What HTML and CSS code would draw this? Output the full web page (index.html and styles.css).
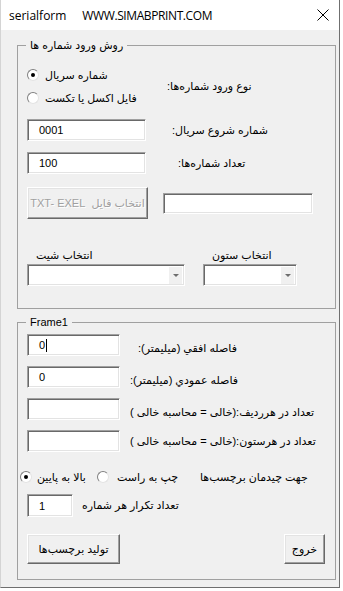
FILE: index.html
```html
<!DOCTYPE html>
<html lang="fa">
<head>
    <meta charset="UTF-8">
    <meta name="viewport" content="width=device-width, initial-scale=1.0">
    <title>serialform</title>
    <link rel="stylesheet" href="styles.css">
</head>
<body>

    <div class="window">
        <!-- Barra de título -->
        <div class="titlebar">
            <span class="title-name">serialform</span>
            <span class="title-site">WWW.SIMABPRINT.COM</span>
            <svg class="close" width="12" height="12" viewBox="0 0 12 12">
                <path d="M0.5 0.5 L11.5 11.5 M11.5 0.5 L0.5 11.5" stroke="#000" stroke-width="1" fill="none"/>
            </svg>
        </div>

        <div class="client">
            <!-- Marco 1: método de entrada -->
            <fieldset class="frame frame-input">
                <legend><span dir="rtl">روش ورود شماره ها</span></legend>
                <div class="frame-body">
                    <div class="row row-type">
                        <div class="radio-group">
                            <div class="radio-line">
                                <span class="radio checked"></span>
                                <span dir="rtl">شماره سریال</span>
                            </div>
                            <div class="radio-line">
                                <span class="radio"></span>
                                <span dir="rtl">فایل اکسل یا تکست</span>
                            </div>
                        </div>
                        <span class="lbl" dir="rtl">نوع ورود شماره‌ها:</span>
                    </div>

                    <div class="row row-start">
                        <div class="textbox wide">0001</div>
                        <span class="lbl" dir="rtl">شماره شروع سریال:</span>
                    </div>

                    <div class="row row-count">
                        <div class="textbox wide">100</div>
                        <span class="lbl" dir="rtl">تعداد شماره‌ها:</span>
                    </div>

                    <div class="row row-file">
                        <button class="button file-btn" disabled><span dir="rtl">انتخاب فایل&nbsp; TXT- EXEL</span></button>
                        <div class="textbox path"></div>
                    </div>

                    <div class="row row-pick">
                        <div class="pick pick-sheet">
                            <span class="pick-caption" dir="rtl">انتخاب شیت</span>
                            <div class="combo"><span class="drop"></span></div>
                        </div>
                        <div class="pick pick-column">
                            <span class="pick-caption" dir="rtl">انتخاب ستون</span>
                            <div class="combo"><span class="drop"></span></div>
                        </div>
                    </div>
                </div>
            </fieldset>

            <!-- Marco 2: Frame1 -->
            <fieldset class="frame frame-layout">
                <legend>Frame1</legend>
                <div class="frame-body">
                    <div class="row row-h">
                        <div class="textbox mid">0<span class="caret"></span></div>
                        <span class="lbl" dir="rtl">فاصله افقي (ميليمتر):</span>
                    </div>

                    <div class="row row-v">
                        <div class="textbox mid">0</div>
                        <span class="lbl" dir="rtl">فاصله عمودي (ميليمتر):</span>
                    </div>

                    <div class="row row-per-row">
                        <div class="textbox mid"></div>
                        <span class="lbl" dir="rtl">تعداد در هرردیف:(خالی = محاسبه خالی )</span>
                    </div>

                    <div class="row row-per-col">
                        <div class="textbox mid"></div>
                        <span class="lbl" dir="rtl">تعداد در هرستون:(خالی = محاسبه خالی )</span>
                    </div>

                    <div class="row row-dir">
                        <span class="radio checked"></span>
                        <span class="dir-a" dir="rtl">بالا به پایین</span>
                        <span class="radio dir-radio2"></span>
                        <span class="dir-b" dir="rtl">چپ به راست</span>
                        <span class="dir-c" dir="rtl">جهت چیدمان برچسب‌ها</span>
                    </div>

                    <div class="row row-repeat">
                        <div class="textbox small">1</div>
                        <span class="lbl" dir="rtl">تعداد تکرار هر شماره</span>
                    </div>

                    <div class="row row-actions">
                        <button class="button make-btn"><span dir="rtl">تولید برچسب‌ها</span></button>
                        <button class="button exit-btn"><span dir="rtl">خروج</span></button>
                    </div>
                </div>
            </fieldset>
        </div>
    </div>

</body>
</html>
```

FILE: styles.css
```css
body {
    margin: 0;
    background-color: #fff;
    font-family: "Liberation Sans", "DejaVu Sans", sans-serif;
    font-size: 11px;
    color: #000;
}

/* Ventana */
.window {
    width: 340px;
    height: 588px;
    box-sizing: border-box;
    background-color: #f0f0f0;
    border-left: 1px solid #d4d4d4;
    border-right: 1px solid #6f6f6f;
    border-bottom: 1px solid #6f6f6f;
}

.titlebar {
    height: 30px;
    background-color: #fff;
    display: flex;
    align-items: center;
    padding-left: 8px;
    font-family: "Open Sans", "Liberation Sans", sans-serif;
    font-size: 12px;
}

.title-site {
    margin-left: 16px;
    letter-spacing: -0.4px;
}

.close {
    margin-left: auto;
    margin-right: 10px;
}

.client {
    padding-top: 8px;
}

/* Marcos */
.frame {
    box-sizing: border-box;
    width: 319px;
    margin: 0 0 0 16px;
    padding: 0;
    border: 1px solid #a0a0a0;
    min-inline-size: 0;
}

.frame legend {
    margin-left: 8px;
    padding: 0 4px;
    line-height: 14px;
}

.frame-layout {
    margin-top: 6px;
}

.frame-input .frame-body {
    padding: 0 9px 22px 9px;
}

.frame-layout .frame-body {
    padding: 0 10px 15px 9px;
}

.row {
    display: flex;
    align-items: center;
}

.lbl {
    white-space: nowrap;
}

/* Controles */
.textbox {
    box-sizing: border-box;
    height: 22px;
    background-color: #fff;
    border: 1px solid;
    border-color: #a0a0a0 #fff #fff #a0a0a0;
    box-shadow: inset 1px 1px #696969, inset -1px -1px #e3e3e3;
    padding-left: 11px;
    line-height: 20px;
    display: flex;
    align-items: center;
}

.textbox.wide { width: 119px; }
.textbox.mid { width: 93px; }
.textbox.small { width: 46px; height: 23px; }
.textbox.path { width: 150px; height: 21px; }

.caret {
    width: 1px;
    height: 13px;
    background-color: #000;
    margin-left: 1px;
}

.button {
    box-sizing: border-box;
    background-color: #f0f0f0;
    border: 1px solid;
    border-color: #fff #696969 #696969 #fff;
    box-shadow: inset -1px -1px #a0a0a0, inset 1px 1px #e3e3e3;
    font: inherit;
    color: #000;
    padding: 0;
}

.button:disabled {
    color: #a0a0a0;
    text-shadow: 1px 1px #fff;
}

.radio {
    box-sizing: border-box;
    width: 12px;
    height: 12px;
    border-radius: 50%;
    background-color: #fff;
    border: 1px solid;
    border-color: #808080 #e3e3e3 #e3e3e3 #808080;
    display: flex;
    align-items: center;
    justify-content: center;
    flex-shrink: 0;
}

.radio.checked::after {
    content: "";
    width: 4px;
    height: 4px;
    border-radius: 50%;
    background-color: #000;
}

.combo {
    box-sizing: border-box;
    height: 22px;
    background-color: #fff;
    border: 1px solid;
    border-color: #a0a0a0 #fff #fff #a0a0a0;
    box-shadow: inset 1px 1px #696969, inset -1px -1px #e3e3e3;
    display: flex;
    justify-content: flex-end;
    padding: 2px 2px 1px 0;
}

.drop {
    width: 13px;
    background-color: #f0f0f0;
    display: flex;
    align-items: center;
    justify-content: center;
}

.drop::after {
    content: "";
    border-left: 3px solid transparent;
    border-right: 3px solid transparent;
    border-top: 3px solid #6d6d6d;
}

/* Marco 1 */
.row-type { margin-top: 14px; }

.radio-group {
    width: 140px;
    display: flex;
    flex-direction: column;
    gap: 5px;
}

.radio-line {
    height: 18px;
    display: flex;
    align-items: center;
    gap: 6px;
}

.row-start { margin-top: 12px; }
.row-start .lbl { margin-left: 26px; }

.row-count { margin-top: 11px; }
.row-count .lbl { margin-left: 32px; }

.row-file { margin-top: 13px; }

.file-btn {
    width: 121px;
    height: 32px;
}

.row-file .path { margin-left: 15px; }

.row-pick {
    margin-top: 29px;
    align-items: flex-start;
}

.pick {
    display: flex;
    flex-direction: column;
}

.pick-sheet { width: 158px; }
.pick-column { width: 94px; margin-left: 18px; }

.pick-caption {
    height: 14px;
    line-height: 14px;
    padding-left: 9px;
    align-self: flex-start;
}

.pick .combo { margin-top: 2px; }

/* Marco 2 */
.row-h { margin-top: 5px; }
.row-h .lbl { margin-left: 18px; margin-top: 6px; }

.row-v { margin-top: 10px; }
.row-v .lbl { margin-left: 10px; margin-top: 6px; }

.row-per-row { margin-top: 10px; }
.row-per-row .lbl { margin-left: 10px; margin-top: 6px; }

.row-per-col { margin-top: 10px; }
.row-per-col .lbl { margin-left: 10px; }

.row-dir {
    margin-top: 16px;
    margin-left: -7px;
    height: 18px;
}

.dir-a { margin-left: 5px; }
.dir-radio2 { margin-left: 11px; }
.dir-b { margin-left: 8px; }
.dir-c { margin-left: 22px; }

.row-repeat { margin-top: 8px; }
.row-repeat .lbl { margin-left: 9px; }

.row-actions { margin-top: 17px; }

.make-btn {
    width: 93px;
    height: 30px;
}

.exit-btn {
    width: 41px;
    height: 30px;
    margin-left: auto;
}
```
